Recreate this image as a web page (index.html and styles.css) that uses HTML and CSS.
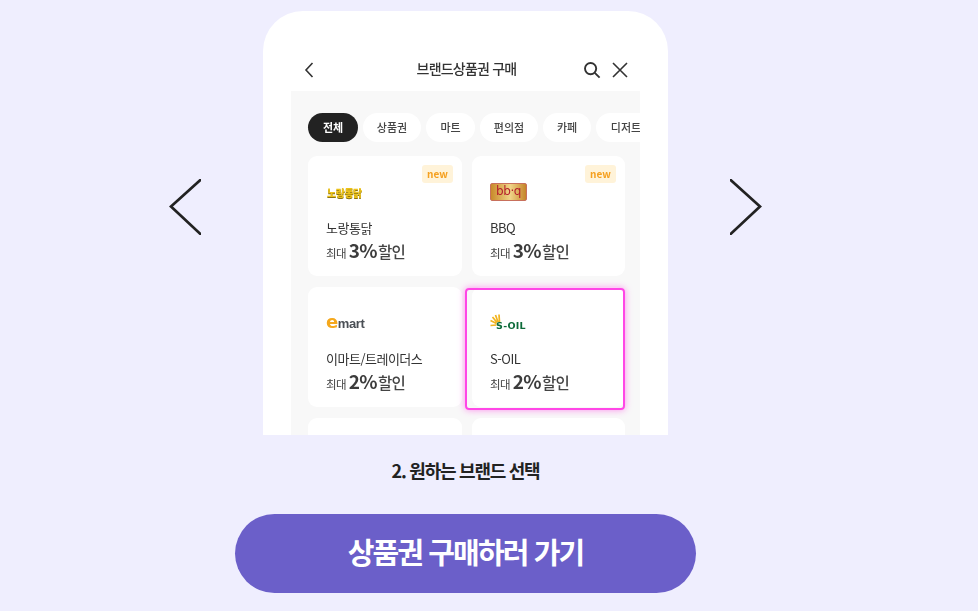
FILE: index.html
```html
<!DOCTYPE html>
<html lang="ko">
<head>
    <meta charset="UTF-8">
    <meta name="viewport" content="width=device-width, initial-scale=1.0">
    <title>브랜드상품권 구매</title>
    <link rel="stylesheet" href="styles.css">
</head>
<body>
    <div class="page">
        <div class="slider">
            <svg class="arrow" width="32" height="56" viewBox="0 0 32 56">
                <path d="M33 -0.5 L2 27.5 L33 56.5" fill="none" stroke="#222" stroke-width="2.7"/>
            </svg>

            <div class="phone">
                <div class="app-header">
                    <svg class="back" width="12" height="18" viewBox="0 0 12 18">
                        <path d="M9.5 2 L3 9 L9.5 16" fill="none" stroke="#333" stroke-width="1.6"/>
                    </svg>
                    <h1>브랜드상품권 구매</h1>
                    <svg class="search" width="18" height="18" viewBox="0 0 18 18">
                        <circle cx="7.6" cy="7.6" r="5.6" fill="none" stroke="#333" stroke-width="1.9"/>
                        <path d="M11.8 11.8 L16.6 16.6" stroke="#333" stroke-width="1.9"/>
                    </svg>
                    <svg class="close" width="16" height="16" viewBox="0 0 16 16">
                        <path d="M1 1 L15 15 M15 1 L1 15" stroke="#333" stroke-width="1.6"/>
                    </svg>
                </div>

                <div class="panel">
                    <ul class="chips">
                        <li class="chip active">전체</li>
                        <li class="chip">상품권</li>
                        <li class="chip">마트</li>
                        <li class="chip">편의점</li>
                        <li class="chip">카페</li>
                        <li class="chip">디저트</li>
                    </ul>

                    <div class="brands">
                        <div class="card">
                            <span class="badge">new</span>
                            <div class="logo"><span class="logo-norang">노랑통닭</span></div>
                            <p class="name">노랑통닭</p>
                            <p class="discount"><small>최대</small><b>3%</b>할인</p>
                        </div>
                        <div class="card">
                            <span class="badge">new</span>
                            <div class="logo"><span class="logo-bbq">bb·q</span></div>
                            <p class="name">BBQ</p>
                            <p class="discount"><small>최대</small><b>3%</b>할인</p>
                        </div>
                        <div class="card">
                            <div class="logo"><span class="logo-emart"><i>e</i>mart</span></div>
                            <p class="name">이마트/트레이더스</p>
                            <p class="discount"><small>최대</small><b>2%</b>할인</p>
                        </div>
                        <div class="card selected">
                            <div class="logo">
                                <svg class="sun" width="14" height="14" viewBox="0 0 14 14">
                                    <path d="M9.5 8 L9 0.5 M8 8 L5.5 1 M7 8.5 L2.5 3 M6.5 9.5 L0.5 6.5 M6.5 11 L0.5 11.5" stroke="#f2b41e" stroke-width="1.7"/>
                                </svg>
                                <span class="logo-soil">S-OIL</span>
                            </div>
                            <p class="name">S-OIL</p>
                            <p class="discount"><small>최대</small><b>2%</b>할인</p>
                            <div class="highlight"></div>
                        </div>
                        <div class="card"></div>
                        <div class="card"></div>
                    </div>
                </div>
            </div>

            <svg class="arrow" width="32" height="56" viewBox="0 0 32 56">
                <path d="M-1 -0.5 L30 27.5 L-1 56.5" fill="none" stroke="#222" stroke-width="2.7"/>
            </svg>
        </div>

        <p class="caption">2. 원하는 브랜드 선택</p>
        <a class="buy-btn" href="#">상품권 구매하러 가기</a>
    </div>
</body>
</html>
```

FILE: styles.css
```css
* {
    margin: 0;
    padding: 0;
    box-sizing: border-box;
}

body {
    font-family: "Noto Sans CJK KR", "Noto Sans", sans-serif;
    background-color: #efeefe;
    color: #222;
    overflow: hidden;
}

.page {
    width: 931px;
    height: 611px;
    display: flex;
    flex-direction: column;
    align-items: center;
    padding-top: 11px;
}

.slider {
    display: flex;
    align-items: flex-start;
    gap: 62px;
}

.arrow {
    margin-top: 168px;
    flex-shrink: 0;
}

/* phone screenshot */
.phone {
    width: 405px;
    height: 424px;
    background-color: white;
    border-radius: 40px 40px 0 0;
    padding: 44px 28px 0;
    overflow: hidden;
    display: flex;
    flex-direction: column;
    filter: blur(0.4px);
}

.app-header {
    height: 36px;
    flex-shrink: 0;
    display: flex;
    align-items: center;
    padding: 0 12px 7px 12px;
}

.app-header h1 {
    flex: 1;
    font-size: 14px;
    font-weight: 500;
    line-height: 18px;
    letter-spacing: -0.8px;
    text-align: center;
    color: #333;
    padding-left: 35px;
    margin-top: -3px;
}

.app-header .search {
    margin-right: 11px;
}

.panel {
    flex: 1;
    background-color: #f8f8f8;
    padding: 22px 0 0 17px;
    overflow: hidden;
}

.chips {
    list-style: none;
    display: flex;
    gap: 5px;
    height: 29px;
    margin-bottom: 14px;
}

.chip {
    flex-shrink: 0;
    width: 49px;
    height: 29px;
    border-radius: 15px;
    background-color: white;
    color: #444;
    font-size: 11px;
    font-weight: 500;
    line-height: 29px;
    text-align: center;
}

.chip:nth-child(2),
.chip:nth-child(4),
.chip:nth-child(6) {
    width: 58px;
}

.chip:nth-child(5) {
    width: 48px;
}

.chip:nth-child(6) {
    padding-left: 2px;
}

.chip.active {
    width: 50px;
    background-color: #222;
    color: white;
    font-weight: 700;
}

.brands {
    display: grid;
    grid-template-columns: 154px 153px;
    grid-auto-rows: 120px;
    column-gap: 10px;
    row-gap: 11px;
}

.card {
    position: relative;
    background-color: white;
    border-radius: 9px;
    padding: 27px 18px 0;
}

.badge {
    position: absolute;
    top: 9px;
    right: 9px;
    width: 31px;
    height: 18px;
    border-radius: 3px;
    background-color: #fff3d9;
    color: #f5a020;
    font-size: 10px;
    font-weight: 700;
    line-height: 17px;
    text-align: center;
}

.logo {
    height: 18px;
    display: flex;
    align-items: center;
}

.logo-norang {
    font-size: 10px;
    font-weight: 900;
    letter-spacing: -0.5px;
    color: #ecc21a;
    text-shadow: 0 0.5px 0 #8a7210;
    margin-left: 1px;
}

.logo-bbq {
    width: 37px;
    height: 18px;
    border-radius: 2px;
    border: 1px solid #c8705c;
    background: linear-gradient(90deg, #c98a2a, #f0d488 55%, #c58528);
    color: #b5202c;
    font-family: "DejaVu Sans", sans-serif;
    font-size: 12px;
    font-weight: 400;
    line-height: 14px;
    text-align: center;
    letter-spacing: -0.4px;
    white-space: nowrap;
}

.logo-emart {
    font-family: "Liberation Sans", sans-serif;
    font-size: 13px;
    font-weight: 700;
    letter-spacing: -0.4px;
    color: #4a4f55;
}

.logo-emart i {
    font-family: "DejaVu Sans", sans-serif;
    font-style: normal;
    font-weight: 700;
    font-size: 18px;
    line-height: 14px;
    color: #f5a81c;
}

.selected .logo {
    margin-top: 1px;
}

.sun {
    margin: -7px -8px 0 0;
}

.logo-soil {
    font-family: "DejaVu Sans", sans-serif;
    font-size: 9.5px;
    font-weight: 700;
    letter-spacing: 0.3px;
    color: #0d6b3a;
    margin-top: 3px;
}

.name {
    margin-top: 17px;
    font-size: 13px;
    line-height: 20px;
    letter-spacing: -0.5px;
    color: #333;
}

.selected .name {
    margin-top: 16px;
}

.discount {
    margin-top: -2px;
    font-size: 15.5px;
    font-weight: 500;
    line-height: 28px;
    letter-spacing: -0.7px;
    color: #444;
}

.discount small {
    font-size: 11.5px;
    font-weight: 400;
    margin-right: 3px;
}

.discount b {
    font-size: 19px;
    font-weight: 700;
    color: #3c3c3c;
    margin-right: 1px;
}

/* pink box drawn over the selected card */
.highlight {
    position: absolute;
    top: 1px;
    left: -7px;
    right: 0;
    height: 122px;
    border: 2.5px solid #ff46e6;
    border-radius: 4px;
    box-shadow: 0 0 7px rgba(255, 70, 230, 0.6);
}

.caption {
    margin-top: 23px;
    font-size: 18px;
    font-weight: 700;
    line-height: 24px;
    letter-spacing: -1.25px;
    color: #222;
}

.buy-btn {
    margin-top: 32px;
    width: 461px;
    height: 79px;
    border-radius: 40px;
    background-color: #6b5fc9;
    color: white;
    font-size: 29px;
    font-weight: 700;
    line-height: 75px;
    letter-spacing: -1.9px;
    text-align: center;
    text-decoration: none;
}
```
